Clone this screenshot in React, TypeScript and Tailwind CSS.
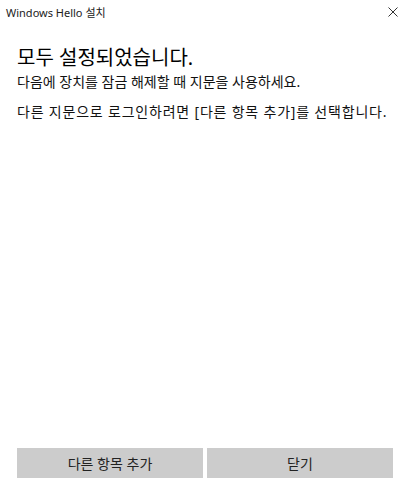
const font = { fontFamily: '"Noto Sans", "Noto Sans CJK KR", sans-serif' }

export default function App() {
  return (
    <div className="w-[410px] h-[493px] bg-white flex flex-col overflow-hidden" style={font}>
      {/* Title bar */}
      <div className="h-[24px] flex items-center justify-between pl-[6px] pr-[12px]">
        <span className="text-[11px] leading-none text-[#222]">Windows Hello 설치</span>
        <svg width="10" height="10" viewBox="0 0 10 10" className="text-[#333]">
          <path d="M0.5 0.5 L9.5 9.5 M9.5 0.5 L0.5 9.5" stroke="currentColor" strokeWidth="1" />
        </svg>
      </div>

      {/* Content */}
      <div className="flex-1 px-[17px] pt-[21px]">
        <h1 className="text-[20px] leading-[26px] text-black font-normal">모두 설정되었습니다.</h1>
        <p className="text-[14px] leading-[20px] text-[#111] mt-[1px]">
          다음에 장치를 잠금 해제할 때 지문을 사용하세요.
        </p>
        <p className="text-[14px] leading-[20px] text-[#111] mt-[10px] whitespace-nowrap tracking-[0.8px]">
          다른 지문으로 로그인하려면 [다른 항목 추가]를 선택합니다.
        </p>
      </div>

      {/* Buttons */}
      <div className="flex gap-[4px] px-[17px] pb-[15px]">
        <button className="flex-1 h-[30px] bg-[#cccccc] text-[14px] text-[#222]">다른 항목 추가</button>
        <button className="flex-1 h-[30px] bg-[#cccccc] text-[14px] text-[#222]">닫기</button>
      </div>
    </div>
  )
}
